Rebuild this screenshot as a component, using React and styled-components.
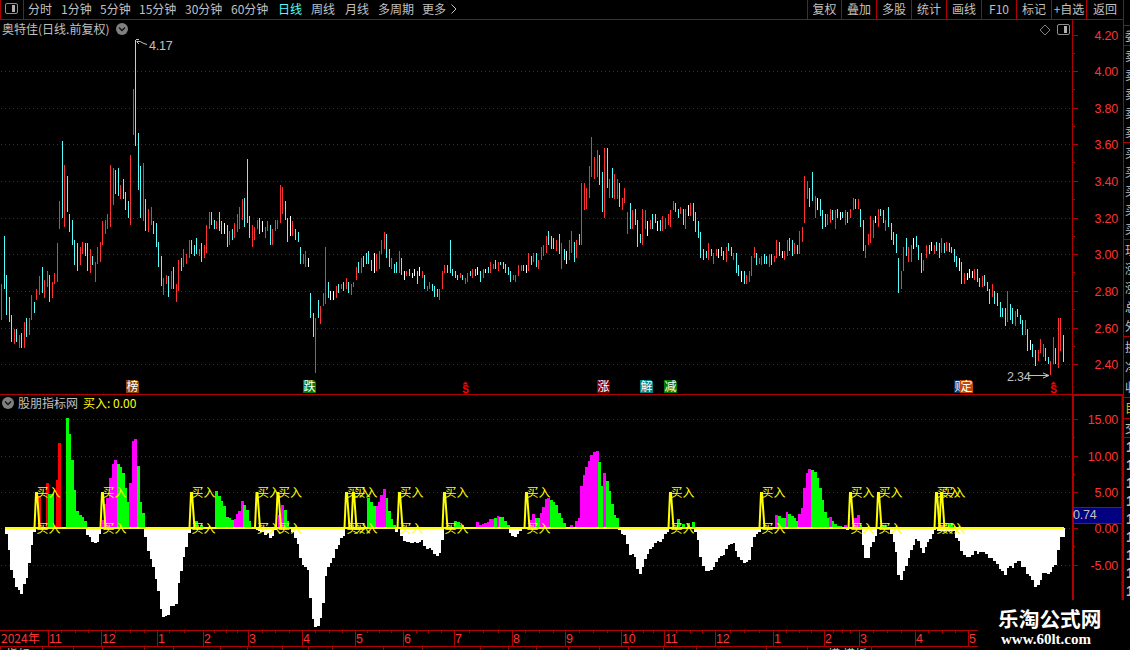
import styled, { createGlobalStyle } from 'styled-components';

const RED = '#b00000';
const TEXT = '#c0c0c0';
const CYAN = '#54fcfc';
const LABEL = '#ff3232';

const CANDLE_COLORS = { r: '#ff3232', c: CYAN, w: '#ffffff' };

// x, colour key, high, low
const CANDLES = `
1r284-320 4c236-289 6c275-315 9c297-322 11c315-342 14r329-344 16c329-342 19r335-348 21c333-348 24r322-348
26c318-337 29r318-335 31r295-320 34c302-313 36r289-300 39r276-295 42c267-293 44r280-298 47r271-287 49c275-302
52r282-298 54r273-284 57r243-282 59r201-229 62c141-218 64r165-227 67c176-212 69c214-232 72c220-245 74c240-265
77c243-271 80r247-265 82r242-254 85c243-256 87c243-271 90r249-273 92c256-265 95r262-282 97r247-264 100r242-262
102r221-245 105r220-234 107r214-229 110r165-227 113r168-205 115c170-194 118c168-196 120r185-199 123c179-199 125c192-210
128c201-218 130r155-225 133r89-135 135c40-146 138c133-190 140c166-218 143r163-221 145c199-231 148r209-232 151r207-225
153c221-234 156c223-247 158c242-267 161c256-286 163r278-295 166r275-284 168c276-297 171r271-289 173c267-289 176r284-302
178r260-291 181c258-271 183r249-267 186r254-264 189r240-258 191c240-254 194c245-256 196c238-254 199r249-256 201c243-262
204r245-258 206r225-253 209r212-229 211c212-225 214c220-229 216r221-229 219c212-231 221c221-234 224w223-234 227c225-247
229r231-245 232c229-240 234r223-238 237r214-232 239r207-229 242r199-220 244c198-227 247c159-223 249c216-238 252r225-247
254r227-240 257r220-229 259c218-234 262w221-232 265r227-238 267r221-231 270c225-245 272r229-245 275r220-231 277r220-229
280r185-223 282r187-214 285c201-220 287c218-242 290w216-236 292r221-236 295c229-240 298c232-242 300c247-264 303r254-264
305r251-267 308w258-267 310c293-318 313c313-337 315r318-373 318c300-318 320r306-324 323r293-306 325r247-304 328c282-298
330w291-300 333w291-300 336r286-298 338c284-293 341r284-289 343c282-291 346r278-289 348c282-293 351r284-295 353r282-287
356r267-280 358c262-273 361r258-273 363c256-267 366c253-264 368c251-264 371c260-271 374w253-273 376r254-271 379r251-269
381r240-254 384r232-249 386c234-258 389c249-267 391r258-269 394c264-273 396c262-273 399r251-273 401c258-275 404w271-280
406r271-276 409c269-276 412w273-278 414w269-276 417c271-284 419w267-276 422r271-278 424c275-289 427r286-291 429r282-289
432c284-291 434c286-297 437c289-297 439r289-300 442r271-289 444r265-273 447c265-273 450c240-273 452c269-276 455c271-278
457c275-280 460r273-278 462c275-280 465r278-284 467r273-282 470c271-276 472r269-278 475c269-276 477w267-275 480c271-282
483r269-278 485w269-273 488c267-273 490r262-273 493r264-269 495c260-269 498r262-271 500c262-265 503c262-269 505c264-273
508c267-275 510c271-282 513r275-280 515r275-282 518r265-276 521r265-271 523c265-271 526w265-273 528r253-271 531c256-265
533r253-262 536c253-267 538r260-269 541r247-260 543r245-256 546r236-253 548c231-245 551c236-249 553c238-249 556r240-251
559c234-254 561r243-269 564c249-260 566w251-264 569r240-260 571r231-253 574c242-262 576r240-258 579c234-245 581r183-245
584r183-210 586r188-209 589r166-198 591r137-177 594r157-179 597r150-177 599c155-185 602c172-212 604r148-218 607c148-188
609r179-198 612c168-198 614r174-199 617r179-199 619c183-207 622r198-210 624r188-203 627r212-234 630c203-229 632r210-229
635c209-225 637c220-247 640c234-243 642r209-245 645r210-229 647w221-236 650r220-229 652c214-229 655c214-223 657w221-231
660c220-231 662r216-231 665r218-229 668r214-225 670r210-227 673r201-210 675c203-212 678c209-218 680r207-214 683c209-225
685r209-229 688w205-216 690r203-216 693c203-221 695c212-232 698c221-238 700c232-258 703c249-260 706c251-258 708r243-260
711c249-256 713r253-264 716r249-256 718w249-258 721c247-256 723c251-260 726r247-262 728c243-251 731c247-256 733r253-260
736c253-273 738c265-276 741w271-282 744c271-284 746r275-284 749r271-282 751r256-276 754r247-258 756c253-265 759r258-264
761r256-265 764c254-264 766c256-264 769r254-267 771c254-265 774r256-262 776r240-258 779c242-256 782w251-258 784r251-260
787r240-256 789c238-251 792c240-256 794r243-254 797c245-254 799r231-254 802r227-242 804r176-223 807r181-199 809c188-207
812c172-201 815r196-218 817w198-210 820c199-216 822c210-229 825c214-227 827r214-225 830r209-223 832c210-220 835r210-229
837c209-218 840w212-220 842c212-218 845r210-225 847c212-223 850r209-218 853r198-210 855c199-209 858r199-209 860c209-227
863c220-251 865r245-258 868r234-245 870r216-243 873r220-238 875w216-223 878r209-227 880c209-216 883c210-223 885r220-231
888c207-227 891c223-240 893c232-245 896c234-253 898c258-293 901r271-289 903r247-271 906c238-256 908r247-262 911r245-262
913w238-249 916c236-247 918c245-260 921c253-273 923r260-271 926r245-258 929c245-254 931w242-251 934r245-254 936c242-251
939c243-258 941r238-253 944c243-253 946r242-251 949c243-252 951c247-253 954c249-262 956c256-267 959w258-271 961c262-284
964r273-284 967w273-280 969w269-278 972w271-278 974r269-280 977c269-282 979c278-287 982r276-287 984c275-286 987c282-291
989c289-304 992r284-297 994c291-304 997c293-306 1000c302-317 1002c308-317 1005c308-326 1007r291-322 1010c304-320 1012c308-324
1015r311-326 1017c309-317 1020c315-324 1022c320-335 1025r320-335 1027c329-351 1030w340-350 1032c344-357 1035c350-366 1038r350-361
1040r339-353 1043r344-357 1045c348-361 1048c357-364 1050r361-375 1053r337-364 1055c348-364 1058r318-368 1060r318-351 1063c335-362`;

const ZERO = 528;

// each run is "x:y x:y ... end", a stepped area against the zero line
const BELOW = [
  '5:534 8:550 10:570 13:578 15:587 18:590 20:594 23:584 26:578 28:563 31:545 33:532 36',
  '86:535 89:537 91:542 94:543 97:542 99:534 101',
  '144:537 147:551 150:559 152:567 155:579 157:591 160:609 162:617 165:616 167:615 170:606 175:604 178:583 180:571 183:557 185:547 188:533 191',
  '256:530 258:531 260:532 264:535 267:533 269:538 272:536 274:530 277',
  '291:532 294:538 297:544 299:558 302:565 304:567 307:570 309:598 312:619 314:627 317:626 320:618 322:603 325:576 327:567 330:563 332:558 335:549 338:545 340:538 343:536 345',
  '395:532 398',
  '400:536 403:541 406:542 410:543 414:542 416:543 419:542 421:540 423:546 426:549 429:548 431:550 433:554 436:556 439:553 441:540 444',
  '509:533 511:536 514:537 517:534 519:531 522',
  '618:530 621:534 623:535 626:544 629:555 632:554 634:557 636:569 639:574 642:567 644:559 647:554 649:549 652:547 654:543 657:541 659:542 662:539 664:534 667:532 669',
  '694:532 697:540 699:557 702:566 705:571 710:570 713:567 715:562 718:558 720:556 723:555 725:549 728:545 730:544 733:543 735:551 737:557 740:560 743:563 746:562 748:560 751:547 753:537 756:534 758:532 761',
  '846:530 849',
  '862:545 864:558 870:547 872:542 875:536 877',
  '890:534 893:542 895:552 897:575 900:580 903:571 905:566 908:558 910:550 913:545 915:539 917:541 920:548 922:553 925:547 927:542 929:539 932:534 934:530 936',
  '937:531 955:538 958:541 960:551 963:555 966:557 971:555 974:551 977:554 979:552 985:554 988:558 993:561 996:564 999:569 1001:571 1004:575 1007:568 1009:566 1012:568 1014:563 1017:561 1021:567 1026:574 1029:576 1031:580 1034:587 1037:585 1040:580 1042:573 1047:574 1050:572 1052:567 1054:565 1057:550 1060:537 1065',
];

const ABOVE = {
  '#ff0000': ['38:496 41', '46:483 49', '56:480 58:443 61'],
  '#ff00ff': [
    '102:520 104:504 106:498 109:478 112:464 114:460 117', '129:483 132:441 134:439 137',
    '234:519 236:514 238:511 241:501 244', '278:515 281:505 284', '376:506 378:502 380:495 383:489 386',
    '476:522 479:525 482:524 484:523 487:522 489:519 494', '497:516 499', '529:520 532:514 535',
    '540:513 542:507 545:499 547:498 550', '570:525 573',
    '575:521 578:518 580:486 583:475 585:467 588:461 590:455 593:452 596:451 599', '603:473 606',
    '775:515 778', '786:512 788', '798:514 801:508 803:488 806:473 808:469 811', '829:517 832',
    '844:525 847', '854:518 857:515 860', '940:525 943',
  ],
  '#00ff00': [
    '48:494 54', '66:418 69:434 71:460 74:490 76:511 79:515 82:517 84:521 87',
    '117:464 120:467 122:473 125:488 127:502 129', '137:466 140:502 142:513 145',
    '195:521 198:527 200:525 203', '215:491 218:496 221:501 223:506 226:517 229:518 231:520 234',
    '243:505 246:510 249:521 251', '284:510 287:521 289', '367:498 370:502 373:506 376',
    '386:498 388:511 391:519 393:525 396', '454:521 457:522 460:525 464', '494:518 497',
    '499:517 504:521 507:525 510', '535:518 540', '550:500 553:502 555:505 558:513 561:518 563:523 566',
    '598:462 601:486 603', '606:481 609:491 611:504 614:515 616:518 619', '677:519 680',
    '682:524 685', '687:523 690', '692:522 695', '778:516 781:518 786', '788:514 791:516 794:518 796:521 798',
    '811:470 814:472 817:478 819:488 822:500 824:512 827:518 829', '832:521 834:524 837:526 842',
    '860:525 862', '880:525 887', '948:524 953',
  ],
};

const SIGNALS = [36.5, 102.5, 191.5, 257, 278, 346.5, 353.5, 399.5, 444.5, 526.5, 670.5, 761.5, 850.5, 878.5, 936.5, 941.5];

const PERIODS = ['分时', '1分钟', '5分钟', '15分钟', '30分钟', '60分钟', '日线', '周线', '月线', '多周期', '更多'];
const ACTIONS = ['复权', '叠加', '多股', '统计', '画线', 'F10', '标记', '+自选', '返回'];

const PRICE_TICKS = [['4.20', 35], ['4.00', 71], ['3.80', 108], ['3.60', 144], ['3.40', 181], ['3.20', 218], ['3.00', 254], ['2.80', 291], ['2.60', 328], ['2.40', 364]];
const VALUE_TICKS = [['15.00', 419], ['10.00', 456], ['5.00', 492], ['0.00', 528], ['-5.00', 565]];

const MONTHS = [[48, '11'], [101, '12'], [157, '1'], [203, '2'], [248, '3'], [302, '4'], [355, '5'], [403, '6'], [454, '7'], [512, '8'], [565, '9'], [621, '10'], [664, '11'], [715, '12'], [773, '1'], [824, '2'], [859, '3'], [915, '4'], [968, '5']];
const WEEKS = [61, 75, 88, 115, 130, 144, 169, 184, 214, 226, 237, 262, 275, 289, 315, 329, 342, 367, 379, 391, 416, 428, 441, 469, 483, 498, 525, 539, 553, 579, 593, 607, 632, 643, 653, 676, 690, 702, 730, 744, 759, 786, 799, 811, 833, 842, 850, 873, 887, 901, 928, 942, 955];
const FOOTER_TICKS = [0, 42, 73, 102, 144, 173, 220, 247, 282, 308, 332, 383, 422, 480, 508, 536, 568, 599, 628, 663, 696, 766, 807, 871];

const BADGES = [
  [126, '榜', '#8a4000'], [303, '跌', '#007c00'], [597, '涨', '#800000'],
  [640, '解', '#008080'], [664, '减', '#007c00'], [954, '财', '#003468'], [960, '定', '#c04808'],
];

const QUOTE_GROUPS = [
  { height: 20, rows: ['委'] },
  { height: 97, rows: ['卖', '卖', '卖', '卖', '卖'] },
  { height: 97, rows: ['买', '买', '买', '买', '买'] },
  { height: 97, rows: ['现', '涨', '涨', '总', '外'] },
  { height: 61, rows: ['换', '净', '收'] },
  { height: 21, rows: ['目'], color: '#c8c800' },
  { height: 19, rows: ['交'] },
];

const candlePath = (key) =>
  CANDLES.trim().split(/\s+/).filter((t) => t.includes(key)).map((t) => {
    const [x, range] = t.split(key);
    const [hi, lo] = range.split('-');
    return `M${+x + 0.5} ${hi}V${lo}`;
  }).join('');

const stepPath = (run) => {
  const parts = run.split(' ');
  const end = parts.pop();
  let d = `M${parts[0].split(':')[0]} ${ZERO}`;
  parts.forEach((p) => {
    const [x, y] = p.split(':');
    d += `H${x}V${y}`;
  });
  return `${d}H${end}V${ZERO}Z`;
};

const GlobalStyle = createGlobalStyle`
  body {
    margin: 0;
    background: #000;
    overflow: hidden;
  }
`;

const Screen = styled.div`
  position: relative;
  display: flex;
  width: 1130px;
  height: 650px;
  overflow: hidden;
  background: #000;
  color: ${TEXT};
  font: 12px/18px "Noto Sans CJK SC", sans-serif;
  white-space: nowrap;

  svg {
    display: block;
    flex: none;
  }
`;

const Main = styled.main`
  display: flex;
  flex-direction: column;
  width: 1123px;
`;

const Toolbar = styled.header`
  display: flex;
  box-sizing: border-box;
  height: 20px;
  border-bottom: 1px solid ${RED};
`;

const PanelToggle = styled.div`
  box-sizing: border-box;
  width: 24px;
  border: solid ${RED};
  border-width: 0 1px;
  padding: 3px 0 0 4px;
`;

const Periods = styled.nav`
  display: grid;
  grid-template-columns: 33px 39px 39px 46px 46px 47px 33px 34px 33px 44px 28px 12px;
  margin-left: 4px;
  flex: 1;
`;

const Period = styled.span`
  color: ${(p) => (p.$active ? CYAN : TEXT)};
`;

const Actions = styled.div`
  display: grid;
  grid-template-columns: 34px 35px 35px 35px 35px 35px 35px 35px 37px;
`;

const Action = styled.span`
  display: flex;
  justify-content: center;
  border-left: 1px solid ${RED};
  overflow: hidden;
`;

const Pane = styled.section`
  display: flex;
  height: ${(p) => p.$height}px;
`;

const Plot = styled.div`
  width: 1072px;
`;

const PaneHeader = styled.div`
  display: flex;
  align-items: center;
  box-sizing: border-box;
  height: ${(p) => p.$height}px;
  padding: 0 0 2px 2px;
  gap: ${(p) => p.$gap}px;
`;

const PaneTools = styled.div`
  display: flex;
  align-items: center;
  gap: 6px;
  margin: 2px 2px 0 auto;
`;

const Signal = styled.span`
  margin-left: 1px;
  color: #ffff00;
`;

const SideStrip = styled.aside`
  box-sizing: border-box;
  width: 7px;
  height: 600px;
  padding-top: 25px;
  border-left: 1px solid ${RED};
  overflow: hidden;
`;

const QuoteGroup = styled.div`
  display: flex;
  flex-direction: column;
  justify-content: space-around;
  box-sizing: border-box;
  height: ${(p) => p.$height}px;
  border-top: 1px solid ${RED};
  padding-left: 1px;
  line-height: 16px;
  color: ${(p) => p.$color || TEXT};
`;

const TradeRow = styled.div`
  height: 18px;
  padding-left: 1px;
  font: bold 14px/18px "Liberation Sans", sans-serif;
`;

const Footer = styled.footer`
  height: 20px;
`;

const Watermark = styled.div`
  position: absolute;
  left: 978px;
  top: 600px;
  width: 152px;
  height: 50px;
  background: #000;
  color: #fff;
`;

const SiteName = styled.div`
  margin: 4px 0 0 20px;
  font: bold 20.7px/28px "Noto Sans CJK SC", sans-serif;
`;

const SiteUrl = styled.div`
  margin: -2px 0 0 23px;
  font: bold 15px/18px "Liberation Serif", serif;
`;

function Label({ x, y, color = LABEL, anchor = 'start', children }) {
  return (
    <text x={x} y={y + 5} fill={color} textAnchor={anchor} fontSize="12.5" fontFamily="Liberation Sans, sans-serif" letterSpacing="-0.2">
      {children}
    </text>
  );
}

function PanelIcon({ width = 13 }) {
  return (
    <svg width={width} height="12" viewBox="0 0 13 12">
      <rect x="0.5" y="0.5" width="12" height="10" rx="1.5" fill="none" stroke="#909090" />
      <rect x="7" y="2" width="3" height="7" fill="#b0b0b0" />
    </svg>
  );
}

function Collapse() {
  return (
    <svg width="12" height="12" viewBox="0 0 12 12">
      <circle cx="6" cy="6" r="6" fill="#808080" />
      <path d="M3 4.5 6 7.5 9 4.5" fill="none" stroke="#101010" strokeWidth="1.3" />
    </svg>
  );
}

function Grid({ rows }) {
  return rows.map((y) => (
    <path key={y} d={`M1 ${y + 0.5}H1072`} stroke={RED} strokeDasharray="1 3" />
  ));
}

function Dollar({ x }) {
  return (
    <g fill="#ff0000">
      <path d={`M${x} 384.5 ${x + 3} 381.5l3 3z`} />
      <text x={x - 0.3} y="393" fontSize="10" fontWeight="bold" fontFamily="Liberation Sans, sans-serif">S</text>
    </g>
  );
}

function PriceChart() {
  return (
    <svg width="1072" height="356" viewBox="0 39 1072 356">
      <Grid rows={PRICE_TICKS.slice(1).map((t) => t[1])} />
      {Object.keys(CANDLE_COLORS).map((k) => (
        <path key={k} d={candlePath(k)} stroke={CANDLE_COLORS[k]} fill="none" />
      ))}
      <path d="M139 39.5h-3M136.5 41.5h3.5l4 2 3 1M137 42l2 2" fill="none" stroke={TEXT} />
      <Label x={149} y={45} color={TEXT}>4.17</Label>
      <Label x={1007} y={376} color={TEXT}>2.34</Label>
      <path d="M1028 375.5h21M1043 373l6 2.5-6 2.5" fill="none" stroke={TEXT} />
      {BADGES.map(([x, char, fill]) => (
        <g key={x}>
          <path d={`M${x} 380h11l2 2v11h-13z`} fill={fill} />
          <text x={x + 0.5} y="391" fill="#fff" fontSize="12">{char}</text>
        </g>
      ))}
      <Dollar x={462.5} />
      <Dollar x={1050.5} />
      <path d="M0 394.5H1072" stroke={RED} />
    </svg>
  );
}

function IndicatorChart() {
  return (
    <svg width="1072" height="218" viewBox="0 412 1072 218">
      <Grid rows={VALUE_TICKS.map((t) => t[1])} />
      <g shapeRendering="crispEdges">
        <path d={BELOW.map(stepPath).join('')} fill="#fff" />
        {Object.entries(ABOVE).map(([fill, runs]) => (
          <path key={fill} d={runs.map(stepPath).join('')} fill={fill} />
        ))}
        <path d="M5 528H1064" stroke="#ffff00" strokeWidth="2" />
      </g>
      {SIGNALS.map((x) => (
        <g key={x} fill="#ffff00" fontSize="12">
          <path d={`M${x - 2} 528 ${x - 0.5} 493h1L${x + 3} 528`} fill="none" stroke="#ffff00" strokeWidth="2" />
          <text x={x} y="497">买入</text>
          <text x={x} y="533">买入</text>
        </g>
      ))}
    </svg>
  );
}

function PriceAxis() {
  return (
    <svg width="51" height="375" viewBox="1072 20 51 375">
      <path d="M1072.5 20V395" stroke={RED} />
      {PRICE_TICKS.map(([label, y], i) => (
        <g key={label}>
          <path d={`M1073 ${y + 0.5}h5${i < 9 ? `M1073 ${y + 18.5}h2` : ''}`} stroke={RED} />
          <Label x={1118} y={y} anchor="end">{label}</Label>
        </g>
      ))}
      <path d="M1072 394.5H1123" stroke={RED} />
    </svg>
  );
}

function ValueAxis() {
  return (
    <svg width="51" height="235" viewBox="1072 395 51 235">
      <path d="M1073 600V395M1122.5 600V395" stroke={RED} strokeWidth="2" />
      <path d="M1072 395.5H1123" stroke={RED} />
      {VALUE_TICKS.map(([label, y], i) => (
        <g key={label}>
          <path d={`M1074 ${y + 0.5}h4${i < 4 ? `M1074 ${y + 18.5}h1` : ''}`} stroke={RED} />
          <Label x={1118} y={y} anchor="end">{label}</Label>
        </g>
      ))}
      <rect x="1074" y="507" width="48" height="17" fill="#000080" />
      <path d="M1074 507.5H1122M1074 523.5H1122" stroke={RED} />
      <Label x={1073} y={514} color={TEXT}>0.74</Label>
    </svg>
  );
}

function DateAxis() {
  return (
    <svg width="1123" height="20" viewBox="0 630 1123 20">
      <path d="M0 630.5H978M0 646.5H978" stroke={RED} />
      <path d={WEEKS.map((x) => `M${x + 0.5} 631v2`).join('')} stroke={RED} />
      <path d={MONTHS.map(([x]) => `M${x + 0.5} 631v15`).join('')} stroke={RED} />
      <path d={FOOTER_TICKS.map((x) => `M${x + 0.5} 647v3`).join('')} stroke={RED} />
      <text x="1" y="643" fill={LABEL} fontSize="12">2024年</text>
      {MONTHS.map(([x, label]) => <Label key={x} x={x + 1} y={638}>{label}</Label>)}
      <text x="6" y="659" fill={TEXT} fontSize="12">指标</text>
      <text x="828" y="659" fill={TEXT} fontSize="12">模</text>
      <text x="843" y="659" fill={CYAN} fontSize="12">模板</text>
    </svg>
  );
}

export default function App() {
  return (
    <Screen>
      <GlobalStyle />
      <Main>
        <Toolbar>
          <PanelToggle><PanelIcon /></PanelToggle>
          <Periods>
            {PERIODS.map((p) => <Period key={p} $active={p === '日线'}>{p}</Period>)}
            <svg width="8" height="18" viewBox="0 0 8 18">
              <path d="M1.5 4.5 6 9l-4.5 4.5" fill="none" stroke={TEXT} />
            </svg>
          </Periods>
          <Actions>
            {ACTIONS.map((a) => <Action key={a}>{a}</Action>)}
          </Actions>
        </Toolbar>

        <Pane $height={375}>
          <Plot>
            <PaneHeader $height={19} $gap={7}>
              <span>奥特佳(日线.前复权)</span>
              <Collapse />
              <PaneTools>
                <svg width="12" height="12" viewBox="0 0 12 12">
                  <path d="M6 1 11 6 6 11 1 6Z" fill="none" stroke="#808080" />
                </svg>
                <PanelIcon />
              </PaneTools>
            </PaneHeader>
            <PriceChart />
          </Plot>
          <PriceAxis />
        </Pane>

        <Pane $height={235}>
          <Plot>
            <PaneHeader $height={17} $gap={4}>
              <Collapse />
              <span>股朋指标网</span>
              <Signal>买入: 0.00</Signal>
            </PaneHeader>
            <IndicatorChart />
          </Plot>
          <ValueAxis />
        </Pane>

        <Footer><DateAxis /></Footer>
      </Main>

      <SideStrip>
        {QUOTE_GROUPS.map((g, i) => (
          <QuoteGroup key={i} $height={g.height} $color={g.color}>
            {g.rows.map((row, j) => <span key={j}>{row}</span>)}
          </QuoteGroup>
        ))}
        <QuoteGroup $height={163}>
          {Array.from({ length: 9 }, (_, i) => <TradeRow key={i}>1</TradeRow>)}
        </QuoteGroup>
      </SideStrip>

      <Watermark>
        <SiteName>乐淘公式网</SiteName>
        <SiteUrl>www.60lt.com</SiteUrl>
      </Watermark>
    </Screen>
  );
}
